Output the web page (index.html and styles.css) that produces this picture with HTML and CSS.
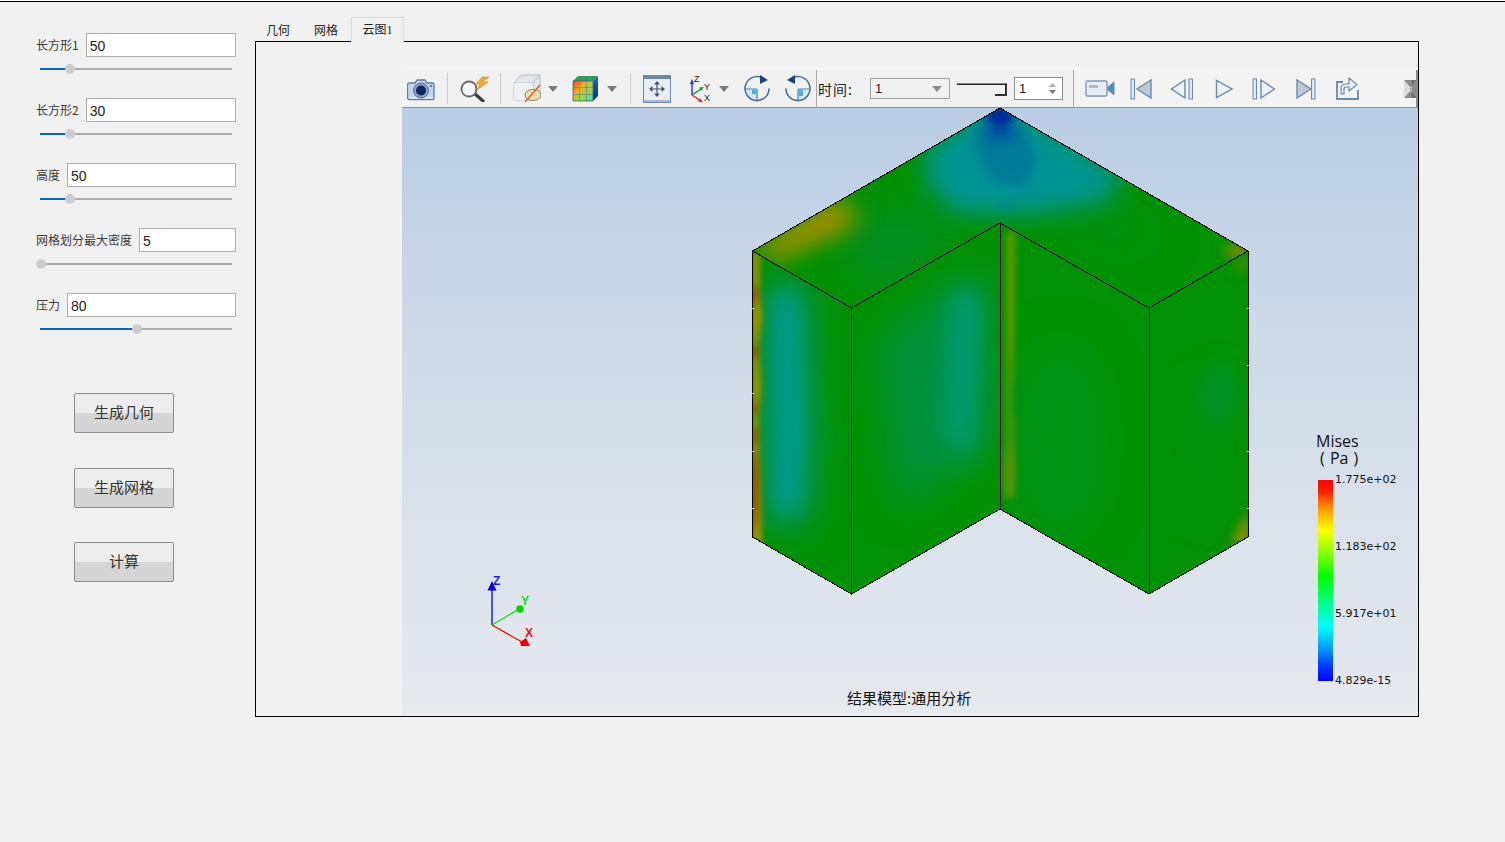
FILE: index.html
```html
<!DOCTYPE html>
<html lang="zh">
<head>
<meta charset="utf-8">
<title>结果模型</title>
<link rel="stylesheet" href="styles.css">
</head>
<body>
<div class="app">
  <aside class="sidebar">
    <div class="group">
      <div class="row"><label class="lbl">长方形1</label><input class="num" value="50"></div>
      <div class="slider"><div class="fill f30"></div><div class="knob"></div></div>
    </div>
    <div class="group">
      <div class="row"><label class="lbl">长方形2</label><input class="num" value="30"></div>
      <div class="slider"><div class="fill f30"></div><div class="knob"></div></div>
    </div>
    <div class="group">
      <div class="row"><label class="lbl">高度</label><input class="num" value="50"></div>
      <div class="slider"><div class="fill f30"></div><div class="knob"></div></div>
    </div>
    <div class="group">
      <div class="row"><label class="lbl">网格划分最大密度</label><input class="num" value="5"></div>
      <div class="slider"><div class="knob"></div></div>
    </div>
    <div class="group">
      <div class="row"><label class="lbl">压力</label><input class="num" value="80"></div>
      <div class="slider"><div class="fill f97"></div><div class="knob"></div></div>
    </div>
    <div class="actions">
      <button class="btn">生成几何</button>
      <button class="btn">生成网格</button>
      <button class="btn b3">计算</button>
    </div>
  </aside>

  <main class="main">
    <div class="tabs">
      <div class="tab">几何</div>
      <div class="tab t2">网格</div>
      <div class="tab active">云图1</div>
    </div>
    <div class="panel">
      <div class="blank"></div>
      <div class="viewer">
        <div class="toolbar">
          <svg class="ic ml5" width="28" height="24" viewBox="0 0 28 24"><path d="M2 6h6l2-3h8l2 3h6a1.500 1.500 0 0 1 1 1.500v13.500a1.500 1.500 0 0 1-1 1.500H2a1.500 1.500 0 0 1-1.500-1.500V7.500A1.500 1.500 0 0 1 2 6z" fill="#c5d5e8" stroke="#5f7ea3" stroke-width="1.300"/><path d="M2 20h24v1.600H2z" fill="#e6edf5"/><circle cx="14" cy="13.500" r="7.500" fill="#8ba3c4" stroke="#4d6a92"/><circle cx="14" cy="13.500" r="5" fill="#10265c"/><circle cx="24" cy="9" r="1.200" fill="#5f7ea3"/></svg>
          <i class="sep ml12"></i>
          <svg class="ic ml12" width="30" height="26" viewBox="0 0 30 26"><path d="M15 18l8 7" stroke="#3b3b3b" stroke-width="3.200" stroke-linecap="round"/><circle cx="9" cy="13" r="7.500" fill="#f7f8fa" stroke="#6a6a6a" stroke-width="1.800"/><path d="M22 1l-6 7h4l-3 6 11-8h-5L29 1z" fill="#eda83c" stroke="#d28a20" stroke-width=".6"/></svg>
          <i class="sep ml10"></i>
          <svg class="ic ml12" width="28" height="29" viewBox="0 0 28 29"><path d="M1 9l7-8h19v17l-7 8H1z" fill="#e3e6ea" stroke="#b7bcc4"/><path d="M1 9h19v17M20 9l7-8" fill="none" stroke="#b7bcc4"/><path d="M1 9h19v17H1z" fill="#eef0f2"/><ellipse cx="20" cy="21" rx="8" ry="5.500" fill="#ecdcae" stroke="#7f8a70"/><path d="M12 28L27 11" stroke="#dc5a2a" stroke-width="1.400"/></svg>
          <svg class="ic ml7" width="10" height="6" viewBox="0 0 10 6"><path d="M0 0h10L5 6z" fill="#7b7b7b"/></svg>
          <svg class="ic ml14" width="27" height="27" viewBox="0 0 27 27"><defs><linearGradient id="rb" x1="0" y1="0" x2="1" y2="1"><stop offset="0" stop-color="#e63b20"/><stop offset=".35" stop-color="#f0b020"/><stop offset=".65" stop-color="#8fdc4c"/><stop offset="1" stop-color="#38d8c0"/></linearGradient><linearGradient id="rs" x1="0" y1="0" x2="0" y2="1"><stop offset="0" stop-color="#1a6ac8"/><stop offset="1" stop-color="#0a2c8c"/></linearGradient></defs><path d="M1 6h20v20H1z" fill="url(#rb)"/><path d="M21 6l5-5v20l-5 5z" fill="url(#rs)"/><path d="M1 6l5-5h20l-5 5z" fill="#2f9a58"/><path d="M7.500 6v20M14.500 6v20M1 12.500h20M1 19.500h20M8 6l5-5M15 6l5-5" stroke="#7a8a80" stroke-width=".8" fill="none"/><path d="M1 6h20v20H1z" fill="none" stroke="#4f5f6f" stroke-width=".8"/></svg>
          <svg class="ic ml8" width="10" height="6" viewBox="0 0 10 6"><path d="M0 0h10L5 6z" fill="#7b7b7b"/></svg>
          <i class="sep ml13"></i>
          <svg class="ic ml12" width="28" height="28" viewBox="0 0 28 28"><rect x=".5" y=".5" width="27" height="27" fill="#eaeef4" stroke="#6d88a8"/><rect x="1" y="1" width="26" height="3" fill="#6d88a8"/><rect x="1" y="25" width="26" height="2" fill="#a9b9cf"/><path d="M14 7v14M7 14h14" stroke="#44566e" stroke-width="1.200"/><path d="M14 6l-3 3.500h6zM14 22l-3-3.500h6zM6 14l3.500-3v6zM22 14l-3.500-3v6z" fill="#44566e"/></svg>
          <svg class="ic ml18 axis" width="22" height="28" viewBox="0 0 22 28"><path d="M3 20V7" stroke="#1a49c0" stroke-width="1.500"/><path d="M3 4L.8 9h4.400z" fill="#1a49c0"/><path d="M3 20l9-6" stroke="#1f8f3a" stroke-width="1.500"/><path d="M15 12l-5 .5 2 3.500z" fill="#1f8f3a"/><path d="M3 20l9 6" stroke="#e0282a" stroke-width="1.500"/><path d="M14 27.500l-5-1 2-3.500z" fill="#e0282a"/><text class="axt" x="5" y="7">Z</text><text class="axt" x="15" y="15">Y</text><text class="axt" x="15" y="26">X</text></svg>
          <svg class="ic ml8" width="10" height="6" viewBox="0 0 10 6"><path d="M0 0h10L5 6z" fill="#7b7b7b"/></svg>
          <svg class="ic ml15" width="26" height="27" viewBox="0 0 26 27"><path d="M13 14H2.500A10.500 10.500 0 0 0 13 24.500z" fill="#d6e8f7"/><path d="M13 14H2M13 14v11" stroke="#2c8ed8" stroke-width="1.200" fill="none"/><path d="M8 15h4v4H8z" fill="#5aa8e0"/><path d="M25 13.500A12 12 0 1 1 17 2.300" fill="none" stroke="#4e6d94" stroke-width="1.600"/><path d="M16 0l8 5-8 4z" fill="#1e3f80"/></svg>
          <svg class="ic ml15" width="26" height="27" viewBox="0 0 26 27"><path d="M13 14h10.500A10.500 10.500 0 0 1 13 24.500z" fill="#d6e8f7"/><path d="M13 14h11M13 14v11" stroke="#2c8ed8" stroke-width="1.200" fill="none"/><path d="M14 15h4v6h-4z" fill="#5aa8e0"/><path d="M1 13.500A12 12 0 1 0 9 2.300" fill="none" stroke="#4e6d94" stroke-width="1.600"/><path d="M10 0L2 5l8 4z" fill="#1e3f80"/></svg>
          <i class="vsep ml5"></i>
          <span class="time ml1">时间:</span>
          <div class="combo ml15"><span>1</span><svg width="10" height="6" viewBox="0 0 10 6"><path d="M0 0h10L5 6z" fill="#8a8a8a"/></svg></div>
          <div class="mini ml7"><div class="mini-h"></div></div>
          <div class="spin ml7"><span>1</span><div class="arrows"><svg width="7" height="4" viewBox="0 0 7 4"><path d="M3.500 0L7 4H0z" fill="#aaa"/></svg><svg width="7" height="4" viewBox="0 0 7 4"><path d="M0 0h7L3.500 4z" fill="#777"/></svg></div></div>
          <i class="vsep ml10"></i>
          <div class="toolbar2 ml7">
            <svg class="ic ml4" width="30" height="18" viewBox="0 0 30 18"><rect x="1" y="1" width="21" height="15" rx="1.500" fill="#e6ecf4" stroke="#7e97b5" stroke-width="1.400"/><rect x="4" y="5" width="9" height="3" fill="#a8b6c8"/><path d="M23 7l6-5v13l-6-5z" fill="#4f8fc0" stroke="#6d88a8"/></svg>
            <svg class="ic ml15" width="22" height="22" viewBox="0 0 22 22"><path d="M21 2v18L7 11z" fill="#bcc9d8" stroke="#6d88a8" stroke-width="1.400"/><rect x="1" y="1" width="3.500" height="20" fill="#dfe7f1" stroke="#6d88a8"/></svg>
            <svg class="ic ml18" width="24" height="22" viewBox="0 0 24 22"><path d="M15 2v18L1.500 11z" fill="#eef2f7" stroke="#6d88a8" stroke-width="1.400"/><rect x="19" y="1" width="3.500" height="20" fill="#dfe7f1" stroke="#6d88a8"/></svg>
            <svg class="ic ml21" width="18" height="20" viewBox="0 0 18 20"><path d="M1.500 1.500v17L17 10z" fill="#eef2f7" stroke="#6d88a8" stroke-width="1.400"/></svg>
            <svg class="ic ml19" width="24" height="22" viewBox="0 0 24 22"><rect x="1" y="1" width="3.500" height="20" fill="#dfe7f1" stroke="#6d88a8"/><path d="M9 2v18L22.500 11z" fill="#eef2f7" stroke="#6d88a8" stroke-width="1.400"/></svg>
            <svg class="ic ml20" width="20" height="22" viewBox="0 0 20 22"><path d="M1 2v18L15 11z" fill="#bcc9d8" stroke="#6d88a8" stroke-width="1.400"/><rect x="15.500" y="1" width="3.500" height="20" fill="#dfe7f1" stroke="#6d88a8"/></svg>
            <svg class="ic ml19" width="25" height="23" viewBox="0 0 25 23"><path d="M8 5H2v17h21v-9" fill="none" stroke="#6d88a8" stroke-width="1.800"/><path d="M6 17v-6c0-3 2-4 5-4h3V1l8 6.500L14 14V10h-3c-1 0-2 1-2 2v5z" fill="#eef2f7" stroke="#6d88a8" stroke-width="1.200"/></svg>
            <svg class="ic ml44" width="12" height="18" viewBox="0 0 12 18"><rect width="12" height="18" fill="#8a8a8a"/><path d="M0 0l8 9-8 9zM12 0L6 9l6 9z" fill="#dcdcdc"/><rect x="8" y="0" width="4" height="18" fill="#555" opacity=".6"/></svg>
          </div>
        </div>
        <div class="canvas">
          <svg class="scene" viewBox="402 107 1016 608" width="1016" height="608">
            <defs>
              <filter id="b3" x="-60%" y="-60%" width="220%" height="220%"><feGaussianBlur stdDeviation="3"/></filter>
              <filter id="b6" x="-60%" y="-60%" width="220%" height="220%"><feGaussianBlur stdDeviation="6"/></filter>
              <filter id="b12" x="-80%" y="-60%" width="260%" height="220%"><feGaussianBlur stdDeviation="12"/></filter>
              <filter id="b20" x="-60%" y="-60%" width="220%" height="220%"><feGaussianBlur stdDeviation="20"/></filter>
              <clipPath id="cTop"><path d="M1000 108L1248 251 1149 308 1000 223 852 308 753 251z"/></clipPath>
              <clipPath id="cL"><path d="M753 251L852 308V594L753 537z"/></clipPath>
              <clipPath id="cIL"><path d="M852 308L1000 223V509L852 594z"/></clipPath>
              <clipPath id="cIR"><path d="M1000 223L1149 308V594L1000 509z"/></clipPath>
              <clipPath id="cR"><path d="M1149 308L1248 251V537L1149 594z"/></clipPath>
            </defs>
            <path d="M1000 108L1248 251V537L1149 594 1000 509 852 594 753 537V251z" fill="#009104"/>
            <g clip-path="url(#cTop)">
              <g filter="url(#b20)">
                <path d="M840 240L900 210 960 225 880 290z" fill="#008c30" opacity=".8"/>
                <path d="M1050 215L1140 215 1160 250 1090 240z" fill="#008c28" opacity=".6"/>
              </g>
              <g filter="url(#b12)">
                <path d="M1000 95L1125 175 1105 202 1040 214 960 214 928 188 925 150z" fill="#009494"/>
                <path d="M753 251L835 195 862 222 775 262z" fill="#a89000"/>
              </g>
              <g filter="url(#b6)">
                <path d="M975 125h50l12 35-12 28-30-5-20-30z" fill="#007a98"/>
                <ellipse cx="1238" cy="251" rx="16" ry="5" fill="#a08c00"/>
              </g>
              <g filter="url(#b6)"><path d="M985 108h30l-3 32h-24z" fill="#0050a0"/></g>
              <g filter="url(#b3)">
                <path d="M1000 106l13 9-6 9h-14l-6-9z" fill="#002a98"/>
                <ellipse cx="1007" cy="205" rx="9" ry="2" fill="#007a98"/>
              </g>
            </g>
            <g clip-path="url(#cL)">
              <g filter="url(#b20)"><path d="M762 280h50l6 170-8 80h-48z" fill="#008f44" opacity=".9"/></g>
              <g filter="url(#b12)"><path d="M770 290h30l8 140-6 85h-30z" fill="#009c92"/></g>
              <g filter="url(#b3)">
                <path d="M752 252h8l-1 40 3 25-4 30 3 40-3 30 4 130h-10z" fill="#a89000"/>
                <ellipse cx="754" cy="295" rx="3" ry="10" fill="#c02000"/>
                <ellipse cx="754" cy="352" rx="3" ry="8" fill="#b83800"/>
                <ellipse cx="754" cy="408" rx="2.500" ry="8" fill="#b83800"/>
                <ellipse cx="755" cy="436" rx="2.500" ry="10" fill="#b83800"/>
                <ellipse cx="755" cy="490" rx="3" ry="40" fill="#b83a00"/>
              </g>
            </g>
            <g clip-path="url(#cIL)">
              <g filter="url(#b20)">
                <path d="M880 340L950 290 990 270V440L900 510z" fill="#008f40" opacity=".95"/>
              </g>
              <g filter="url(#b12)">
                <path d="M952 290h28l-4 110-6 70-24-40z" fill="#009c78"/>
              </g>
            </g>
            <g clip-path="url(#cIR)">
              <g filter="url(#b3)">
                <path d="M1007 232h8l-1 130-2 45 4 20-1 70h-10z" fill="#809a00" opacity=".8"/>
                <ellipse cx="1010" cy="470" rx="6" ry="30" fill="#8f9400" opacity=".8"/>
              </g>
              <g filter="url(#b20)"><ellipse cx="1060" cy="440" rx="50" ry="100" fill="#009418" opacity=".8"/></g>
            </g>
            <g clip-path="url(#cR)">
              <g filter="url(#b12)"><ellipse cx="1219" cy="393" rx="9" ry="28" fill="#008f54"/></g>
              <g filter="url(#b20)"><ellipse cx="1205" cy="450" rx="16" ry="60" fill="#008f20" opacity=".6"/></g>
              <g filter="url(#b6)"><path d="M1249 510v30l-18 8z" fill="#c09000"/><path d="M1248 252v14l-16 8z" fill="#8a9200" opacity=".8"/></g>
            </g>
            <g class="edges">
              <path d="M1000 108L1248 251V537L1149 594 1000 509 851.500 594 752.500 537V251z"/>
              <path d="M752.500 251L851.500 308V594M851.500 308L1000 223V509M1000 223L1149 308V594M1149 308L1248 251"/>
            </g>
            <path class="ticks" d="M751 308h3M751 393h3M751 451h3M751 508h3M1247 308h3M1247 365h3M1247 451h3M1247 508h3"/>
            <path d="M492 625V586" stroke="#0000e0" stroke-width="1.300"/>
            <path d="M492 581l-4.500 9.500h9z" fill="#0000e0"/>
            <text class="tri" x="493" y="585" fill="#1a1ae0">Z</text>
            <path d="M492 625l27-16" stroke="#00e000" stroke-width="1.200"/>
            <circle cx="520" cy="609" r="3.800" fill="#00d800"/>
            <text class="tri" x="521" y="605" fill="#10e010">Y</text>
            <path d="M492 625l30 17" stroke="#e80000" stroke-width="1.200"/>
            <path d="M520 642l6-4 4 8h-9z" fill="#f00000"/>
            <text class="tri" x="525" y="637" fill="#f01010">X</text>
          </svg>
          <div class="legend-title">Mises<br><span class="unit">( Pa )</span></div>
          <div class="legend-bar"></div>
          <div class="legend-val v1">1.775e+02</div>
          <div class="legend-val v2">1.183e+02</div>
          <div class="legend-val v3">5.917e+01</div>
          <div class="legend-val v4">4.829e-15</div>
          <div class="caption">结果模型:通用分析</div>
        </div>
      </div>
    </div>
  </main>
</div>
</body>
</html>
```
FILE: styles.css
```css
* { box-sizing: border-box; }
html, body { margin: 0; padding: 0; }
body {
  width: 1505px;
  height: 842px;
  overflow: hidden;
  background: #f1f1f1;
  font-family: "Noto Sans CJK SC", "Liberation Sans", sans-serif;
  color: #333;
}
.app {
  display: flex;
  height: 842px;
  margin-top: 1px;
  border-top: 1px solid #000;
  box-shadow: 0 -1px 0 #fff;
}

/* sidebar */
.sidebar { width: 255px; flex: none; padding: 31px 19px 0 36px; }
.group { height: 65px; }
.row { display: flex; align-items: center; height: 24px; gap: 7px; }
.lbl { font-size: 12px; line-height: 24px; white-space: nowrap; color: #3a3a3a; }
.num {
  flex: 1;
  min-width: 0;
  height: 24px;
  margin: 0;
  border: 1px solid #adadad;
  outline: 0;
  padding: 1px 3px 0;
  background: #fff;
  font-family: "Liberation Sans", sans-serif;
  font-size: 14px;
  color: #222;
}
.slider { position: relative; height: 2px; width: 192px; margin: 11px 0 0 4px; background: #acacac; }
.fill { height: 2px; background: #0a68b8; }
.f30 { width: 30px; }
.f97 { width: 97px; }
.knob {
  position: absolute;
  top: -4px;
  left: 25px;
  width: 10px;
  height: 10px;
  border-radius: 50%;
  background: #cdcdcd;
}
.group:nth-child(4) .knob { left: -4px; }
.group:nth-child(5) .knob { left: 92px; }
.actions { display: flex; flex-direction: column; margin: 35px 0 0 38px; gap: 35px; }
.btn {
  width: 100px;
  height: 40px;
  padding: 0 0 3px;
  border: 1px solid #8c8c8c;
  border-radius: 2px;
  background: linear-gradient(#ededed 0 50%, #d5d5d5 50% 100%);
  font-family: "Noto Sans CJK SC", sans-serif;
  font-size: 15px;
  color: #333;
}
.b3 { margin-top: -1px; }

/* tabs and panel */
.main { flex: none; width: 1164px; display: flex; flex-direction: column; }
.tabs { display: flex; height: 39px; padding: 15px 0 0 11px; position: relative; z-index: 1; }
.tab { font-size: 12px; width: 24px; line-height: 26px; white-space: nowrap; color: #222; }
.t2 { margin-left: 24px; }
.active {
  width: 53px;
  height: 25px;
  margin-left: 13px;
  text-align: center;
  border: 1px solid #dadada;
  border-bottom: 0;
  background: #f1f1f1;
  line-height: 24px;
  font-family: "Liberation Serif", "Noto Sans CJK SC", serif;
}
.panel { display: flex; height: 676px; border: 1px solid #000; padding-top: 27px; padding-bottom: 1px; }
.blank { width: 146px; flex: none; }
.viewer { flex: 1; min-width: 0; display: flex; flex-direction: column; }

/* toolbar */
.toolbar {
  display: flex;
  align-items: center;
  height: 39px;
  flex: none;
  background: #f1f1f1;
  border-bottom: 1px solid #8e8e8e;
  border-top: 1px solid #f8f8f8;
}
.ic { flex: none; display: block; }
.axis { overflow: visible; }
.axt { font: 9px "Liberation Sans", sans-serif; fill: #222; }
.ml1 { margin-left: 1px; }
.ml4 { margin-left: 4px; }
.ml5 { margin-left: 5px; }
.ml7 { margin-left: 7px; }
.ml8 { margin-left: 8px; }
.ml10 { margin-left: 10px; }
.ml12 { margin-left: 12px; }
.ml13 { margin-left: 13px; }
.ml14 { margin-left: 14px; }
.ml15 { margin-left: 15px; }
.ml18 { margin-left: 18px; }
.ml19 { margin-left: 19px; }
.ml20 { margin-left: 20px; }
.ml21 { margin-left: 21px; }
.ml44 { margin-left: 44px; }
.sep { display: block; flex: none; width: 1px; height: 31px; background: #c8c8c8; }
.vsep { display: block; flex: none; width: 1px; height: 38px; background: #a8a8a8; }
.time { flex: none; width: 37px; font-size: 14px; color: #222; white-space: nowrap; letter-spacing: 1px; }
.combo {
  flex: none;
  display: flex;
  align-items: center;
  justify-content: space-between;
  width: 80px;
  height: 21px;
  padding: 0 7px 0 4px;
  border: 1px solid #a0a0a0;
  font: 13px "Liberation Sans", sans-serif;
  color: #222;
}
.mini { flex: none; width: 50px; height: 12px; margin-top: 3px; border-top: 1px solid #222; box-shadow: 0 -1px 0 #888; position: relative; }
.mini-h {
  position: absolute;
  right: 0;
  top: 0;
  width: 12px;
  height: 11px;
  border-right: 2px solid #333;
  border-bottom: 2px solid #333;
  background: #f1f1f1;
}
.spin {
  flex: none;
  display: flex;
  align-items: center;
  justify-content: space-between;
  width: 49px;
  height: 23px;
  padding: 0 6px 0 4px;
  border: 1px solid #8a8a8a;
  background: #fff;
  font: 13px "Liberation Sans", sans-serif;
  color: #222;
}
.arrows { display: flex; flex-direction: column; gap: 3px; }
.arrows svg { display: block; }
.toolbar2 {
  flex: 1;
  align-self: stretch;
  display: flex;
  align-items: center;
  background: #f3f3f3;
  border-right: 2px solid #8e8e8e;
  margin-right: 1px;
}

/* scene */
.canvas {
  position: relative;
  flex: 1;
  min-height: 0;
  overflow: hidden;
  background: linear-gradient(#b9cde4 0%, #c9d8e8 30%, #dbe2eb 70%, #e6e9ee 100%);
}
.scene { position: absolute; left: 0; top: -1px; display: block; }
.edges path { fill: none; stroke: #000; stroke-width: 1; shape-rendering: crispEdges; }
.ticks { fill: none; stroke: #e8eef0; stroke-width: 1; shape-rendering: crispEdges; opacity: .85; }
.tri { font: bold 12px "Liberation Sans", sans-serif; }
.legend-title {
  position: absolute;
  left: 914px;
  top: 325px;
  font: 16px/17px "Open Sans", sans-serif;
  color: #111;
}
.unit { margin-left: 4px; word-spacing: 1px; }
.legend-bar {
  position: absolute;
  left: 916px;
  top: 372px;
  width: 15px;
  height: 201px;
  background: linear-gradient(#ff0000 0%, #ff2000 6%, #ff6000 10%, #ffa000 15%, #ffff00 25%, #80ff00 37%, #00ff00 48%, #00ff80 60%, #00ffff 73%, #0090ff 85%, #0040ff 92%, #0000ff 100%);
}
.legend-val {
  position: absolute;
  left: 933px;
  font: 11px/14px "DejaVu Sans", sans-serif;
  color: #111;
}
.v1 { top: 365px; }
.v2 { top: 432px; }
.v3 { top: 499px; }
.v4 { top: 566px; }
.caption {
  position: absolute;
  left: 445px;
  top: 580px;
  font-size: 15px;
  line-height: 20px;
  color: #111;
  white-space: nowrap;
}
```
